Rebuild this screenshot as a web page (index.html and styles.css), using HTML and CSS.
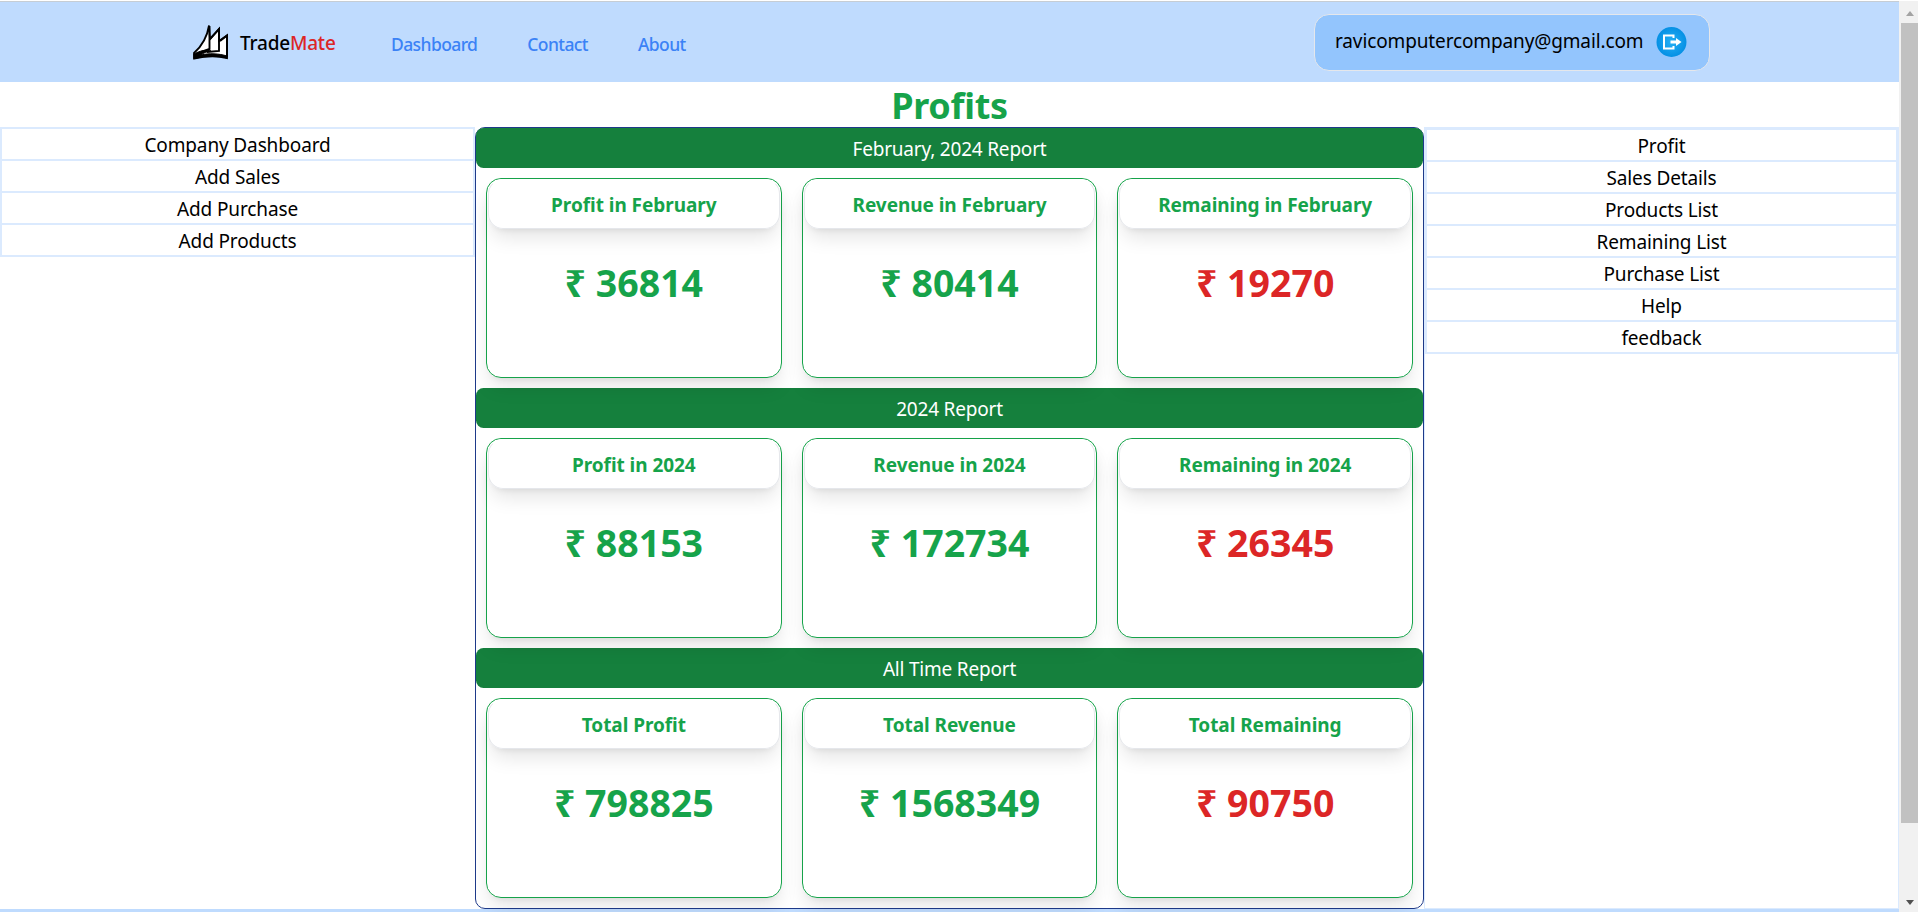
FILE: index.html
```html
<!DOCTYPE html>
<html lang="en">
<head>
<meta charset="utf-8">
<title>TradeMate</title>
<link rel="stylesheet" href="styles.css">
</head>
<body>
<div class="window">
<div class="page">
  <header class="navbar">
    <div class="brand">
      <svg class="logo" viewBox="0 0 36 36"><path d="M1 34.500V29C9 22 14 14 16 1.500L17 15L26 5V17L34 11.500V34C23 31.500 13 32 1 34.500Z" fill="#fff" stroke="#000" stroke-width="1.800"/><path d="M1 34.500V30C7 26.500 14 25.500 18 27C14 27.500 10 29 8 31C16 29 26 29.500 34 32V34C23 31.500 13 32 1 34.500Z" fill="#000" stroke="#000" stroke-width="1"/><path d="M16.500 2V25L8 28M17 15L26 5V27L14 28M27 17L34 11.500V33" fill="none" stroke="#000" stroke-width="1.900"/></svg>
      <span class="brand-name">Trade<span class="brand-accent">Mate</span></span>
    </div>
    <nav class="links"><a>Dashboard</a><a>Contact</a><a>About</a></nav>
    <div class="user">
      <span class="email">ravicomputercompany@gmail.com</span>
      <svg class="logout" viewBox="0 0 30 30"><defs><radialGradient id="g"><stop offset="0" stop-color="#27b0f5"/><stop offset="1" stop-color="#0590e4"/></radialGradient></defs><circle cx="15" cy="15" r="15" fill="url(#g)"/><path d="M17 11V8.500H7.500V21.500H17V19" fill="none" stroke="#fff" stroke-width="2"/><path d="M14 13.500H19.500V11L25 15L19.500 19V16.500H14Z" fill="#fff"/></svg>
    </div>
  </header>
  <h1 class="title">Profits</h1>
  <div class="columns">
    <aside class="side">
      <ul class="menu"><li>Company Dashboard</li><li>Add Sales</li><li>Add Purchase</li><li>Add Products</li></ul>
    </aside>
    <main class="reports">
      <h2 class="bar">February, 2024 Report</h2>
      <div class="cards">
        <section class="card"><h3>Profit in February</h3><p>₹ 36814</p></section>
        <section class="card"><h3>Revenue in February</h3><p>₹ 80414</p></section>
        <section class="card due"><h3>Remaining in February</h3><p>₹ 19270</p></section>
      </div>
      <h2 class="bar">2024 Report</h2>
      <div class="cards">
        <section class="card"><h3>Profit in 2024</h3><p>₹ 88153</p></section>
        <section class="card"><h3>Revenue in 2024</h3><p>₹ 172734</p></section>
        <section class="card due"><h3>Remaining in 2024</h3><p>₹ 26345</p></section>
      </div>
      <h2 class="bar">All Time Report</h2>
      <div class="cards">
        <section class="card"><h3>Total Profit</h3><p>₹ 798825</p></section>
        <section class="card"><h3>Total Revenue</h3><p>₹ 1568349</p></section>
        <section class="card due"><h3>Total Remaining</h3><p>₹ 90750</p></section>
      </div>
    </main>
    <aside class="side side-right">
      <ul class="menu"><li>Profit</li><li>Sales Details</li><li>Products List</li><li>Remaining List</li><li>Purchase List</li><li>Help</li><li>feedback</li></ul>
    </aside>
  </div>
  <footer class="footer"></footer>
</div>
<div class="scrollbar"><i class="arrow up"></i><i class="thumb"></i><i class="arrow down"></i></div>
</div>
</body>
</html>
```
FILE: styles.css
```css
* { box-sizing: border-box; margin: 0; padding: 0; }
body { font: 19px/30px "Noto Sans", "Open Sans", sans-serif; letter-spacing: -0.13px; color: #000; background: #fff; overflow: hidden; }
.window { display: flex; height: 912px; padding-top: 1px; overflow: hidden; }
.page { width: 1899px; flex: none; border-top: 1px solid #c6cdd4; }
.navbar { height: 80px; background: #bfdbfe; display: flex; align-items: center; padding: 0 189px 0 192px; }
.brand { display: flex; align-items: center; gap: 11px; width: 199px; padding-left: 1px; }
.logo { width: 36px; height: 36px; }
.brand-name { font-size: 19px; font-weight: 500; letter-spacing: -0.2px; padding-top: 2px; }
.brand-accent { color: #dc2626; }
.links { display: flex; gap: 50px; font-size: 17.5px; font-weight: 500; letter-spacing: -0.6px; color: #3b82f6; padding-top: 3px; }
.user { margin-left: auto; display: flex; align-items: center; width: 396px; height: 57px; padding: 0 22px 0 20px; justify-content: space-between; background: #93c5fd; border: 1px solid #e5e7eb; border-radius: 15px; }
.email { white-space: nowrap; padding-bottom: 3px; letter-spacing: -0.13px; }
.logout { width: 31px; height: 30px; }
.title { font-size: 36px; line-height: 45px; height: 45px; padding-top: 1px; font-weight: 700; letter-spacing: -0.3px; color: #16a34a; text-align: center; }
.columns { display: grid; grid-template-columns: 475px 949px 475px; height: 782px; }
.menu { list-style: none; text-align: center; border: 2px solid #dbeafe; }
.menu li { height: 32px; line-height: 32px; border-bottom: 2px solid #dbeafe; }
.menu li:last-child { height: 30px; border-bottom: 0; }
.side-right { border: 1px solid #dbeafe; }
.reports { border: 1px solid #1e3a8a; border-radius: 10px; }
.bar { height: 40px; line-height: 42px; font-size: 19px; font-weight: 400; letter-spacing: -0.2px; text-align: center; color: #fff; background: #15803d; border-radius: 7.5px; }
.cards { display: grid; grid-template-columns: repeat(3, 1fr); gap: 20px; padding: 10px; }
.card { height: 200px; border: 1px solid #16a34a; border-radius: 15px; padding: 0 1px; text-align: center; color: #16a34a; box-shadow: 0 12.5px 18.75px -3.75px rgba(0,0,0,.1), 0 5px 7.5px -5px rgba(0,0,0,.1); }
.card h3 { height: 50px; line-height: 51px; font-size: 19px; font-weight: 700; letter-spacing: -0.05px; border: 1px solid #e5e7eb; border-top-color: #fff; border-radius: 15px; box-shadow: 0 12.5px 18.75px -3.75px rgba(0,0,0,.1), 0 5px 7.5px -5px rgba(0,0,0,.1); }
.card p { margin-top: 31px; font-size: 37.5px; line-height: 45px; font-weight: 700; letter-spacing: 0; }
.due p { color: #dc2626; }
.footer { height: 3px; background: #bfdbfe; }
.scrollbar { width: 19px; flex: none; background: #f1f1f1; display: flex; flex-direction: column; align-items: center; padding: 10px 0 7px 2px; }
.arrow { border: 4px solid transparent; }
.up { border-bottom: 5px solid #a3a3a3; border-top: 0; }
.down { border-top: 5px solid #505050; border-bottom: 0; margin-top: auto; }
.thumb { width: 17px; height: 800px; margin-top: 7px; background: #c1c1c1; }
```
